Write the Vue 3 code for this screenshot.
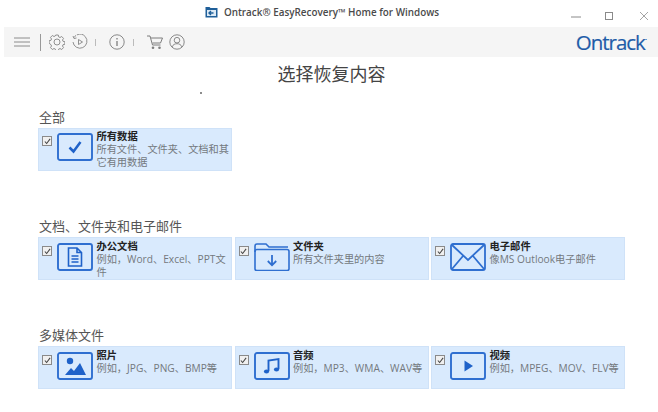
<script setup>
const groups = [
  { label: '全部', gap: 'first', items: [
    { icon: 'check', title: '所有数据', desc: '所有文件、文件夹、文档和其它有用数据' },
  ]},
  { label: '文档、文件夹和电子邮件', gap: 'next', items: [
    { icon: 'doc', title: '办公文档', desc: '例如，Word、Excel、PPT文件' },
    { icon: 'folder', title: '文件夹', desc: '所有文件夹里的内容' },
    { icon: 'mail', title: '电子邮件', desc: '像MS Outlook电子邮件' },
  ]},
  { label: '多媒体文件', gap: 'next', items: [
    { icon: 'photo', title: '照片', desc: '例如，JPG、PNG、BMP等' },
    { icon: 'music', title: '音频', desc: '例如，MP3、WMA、WAV等' },
    { icon: 'video', title: '视频', desc: '例如，MPEG、MOV、FLV等' },
  ]},
]
</script>

<template>
  <div class="app">
    <header class="titlebar">
      <div class="title">
        <svg class="app-icon" width="13" height="12" viewBox="0 0 13 12">
          <path d="M0.5 1h4l1 1h7v9.500h-12z" fill="#1f5f99" />
          <rect x="2" y="4" width="9" height="6" fill="#dbe9f5" />
          <path d="M8.500 7H4M6 5L4 7l2 2" fill="none" stroke="#1f5f99" stroke-width="1.400" />
        </svg>
        <span>Ontrack® EasyRecovery™ Home for Windows</span>
      </div>
      <div class="win-controls">
        <svg width="10" height="10" viewBox="0 0 10 10"><path d="M0 6h10" stroke="#8a8a8a" stroke-width="1" /></svg>
        <svg class="win-max" width="10" height="10" viewBox="0 0 10 10"><rect x="1.500" y="1.500" width="7" height="7" fill="none" stroke="#8a8a8a" /></svg>
        <svg class="win-close" width="10" height="10" viewBox="0 0 10 10"><path d="M1 1l8 8M9 1l-8 8" stroke="#9a9a9a" stroke-width="0.900" /></svg>
      </div>
    </header>

    <nav class="toolbar">
      <svg class="tool menu" width="16" height="10" viewBox="0 0 16 10"><path d="M0 1h16M0 5h16M0 9h16" stroke="#8c8c8c" stroke-width="1" /></svg>
      <span class="sep tall"></span>
      <svg class="tool gear" width="16" height="16" viewBox="0 0 16 16" fill="none" stroke="#858585" stroke-width="0.900">
        <path d="M6.700 1h2.600l.4 1.900 1.300.6 1.700-1 1.800 1.900-1 1.600.5 1.300 1.900.4v2.600l-1.900.4-.5 1.300 1 1.600-1.800 1.900-1.700-1-1.300.6-.4 1.900H6.700l-.4-1.900-1.300-.6-1.700 1-1.800-1.900 1-1.600-.5-1.300L.1 9.300V6.700L2 6.300l.5-1.300-1-1.600L3.300 1.500l1.700 1 1.300-.6z" />
        <circle cx="8" cy="8" r="3" />
      </svg>
      <svg class="tool replay" width="16" height="16" viewBox="0 0 16 16" fill="none" stroke="#858585" stroke-width="0.900">
        <path d="M2 3.500A7 7 0 1 1 1 8" stroke-dasharray="3 1 40" />
        <path d="M1 2l1 2.500 2.500-.5" />
        <path d="M6.500 5.500l4 2.500-4 2.500z" />
      </svg>
      <span class="sep short first"></span>
      <svg class="tool info" width="16" height="16" viewBox="0 0 16 16" fill="none" stroke="#7d7d7d">
        <circle cx="8" cy="8" r="7.200" stroke-width="0.900" />
        <path d="M8 7v5M8 4v1.500" stroke-width="1.300" />
      </svg>
      <span class="sep short second"></span>
      <svg class="tool cart" width="16" height="15" viewBox="0 0 16 15" fill="none" stroke="#7d7d7d">
        <path d="M0 1h3l2.500 9h8M4 3h11.500l-2 5H5.500" stroke-width="1" />
        <circle cx="6" cy="12.800" r="1.300" fill="#7d7d7d" stroke="none" />
        <circle cx="12.500" cy="12.800" r="1.300" fill="#7d7d7d" stroke="none" />
      </svg>
      <svg class="tool user" width="16" height="16" viewBox="0 0 16 16" fill="none" stroke="#7d7d7d" stroke-width="0.900">
        <circle cx="8" cy="8" r="7.200" />
        <circle cx="8" cy="6.200" r="2.800" />
        <path d="M3 13c1-2.500 3-3.300 5-3.300s4 .8 5 3.300" />
      </svg>
      <span class="logo">Ontrack<sup>·</sup></span>
    </nav>

    <main class="content">
      <h1 class="heading">选择恢复内容</h1>
      <i class="speck"></i>
      <section v-for="g in groups" :key="g.label" class="group" :class="g.gap">
        <h2 class="group-label">{{ g.label }}</h2>
        <div class="cards">
          <article v-for="c in g.items" :key="c.title" class="card">
            <span class="checkbox">
              <svg width="7" height="7" viewBox="0 0 8 8"><path d="M1 4l2 2.300L7 1" fill="none" stroke="#444" stroke-width="1.200" /></svg>
            </span>
            <span class="icon">
              <svg v-if="c.icon === 'check'" width="36" height="28" viewBox="0 0 36 28">
                <rect x="1" y="1" width="34" height="26" rx="2" fill="none" stroke="#2f6fd0" stroke-width="1.900" />
                <path d="M12.500 14.500l4 4 7-9.500" fill="none" stroke="#1f62c9" stroke-width="2.500" />
              </svg>
              <svg v-else-if="c.icon === 'doc'" width="36" height="28" viewBox="0 0 36 28">
                <rect x="1" y="1" width="34" height="26" rx="2" fill="none" stroke="#2f6fd0" stroke-width="1.900" />
                <path d="M11.500 5h8.500l4.500 4.500V23h-13z M20 5v4.500h4.500M14.500 13h7M14.500 16h7M14.500 19h7" fill="none" stroke="#1f62c9" stroke-width="1.600" />
              </svg>
              <svg v-else-if="c.icon === 'folder'" width="36" height="28" viewBox="0 0 36 28" fill="none" stroke="#2f6fd0" stroke-width="1.600">
                <path d="M1 9V3q0-2 2-2h9l3 3h19" />
                <path d="M3 6.500h30q2 0 2 2V26q0 1.500-2 1.500H3q-2 0-2-1.500V8.500q0-2 2-2z" />
                <path d="M18 12v10M13.800 18l4.200 4.300 4.200-4.300" stroke-width="1.800" />
              </svg>
              <svg v-else-if="c.icon === 'mail'" width="36" height="28" viewBox="0 0 36 28" fill="none" stroke="#2f6fd0" stroke-width="1.800">
                <rect x="1" y="1" width="34" height="26" rx="2" />
                <path d="M2 2l16 15L34 2M2 26l11-13M34 26L23 13" />
              </svg>
              <svg v-else-if="c.icon === 'photo'" width="36" height="28" viewBox="0 0 36 28">
                <rect x="1" y="1" width="34" height="26" rx="2" fill="none" stroke="#2f6fd0" stroke-width="1.900" />
                <circle cx="13" cy="9" r="3.200" fill="#1f62c9" />
                <path d="M8 23l6-7 3 3 6-8 6 12z" fill="#1f62c9" />
              </svg>
              <svg v-else-if="c.icon === 'music'" width="36" height="28" viewBox="0 0 36 28">
                <rect x="1" y="1" width="34" height="26" rx="2" fill="none" stroke="#2f6fd0" stroke-width="1.900" />
                <path d="M14.500 19V8.500l10-1.500V17" fill="none" stroke="#1f62c9" stroke-width="1.900" />
                <ellipse cx="12.500" cy="19.500" rx="2.600" ry="2.100" fill="#1f62c9" />
                <ellipse cx="22.500" cy="17.500" rx="2.600" ry="2.100" fill="#1f62c9" />
              </svg>
              <svg v-else width="36" height="28" viewBox="0 0 36 28">
                <rect x="1" y="1" width="34" height="26" rx="2" fill="none" stroke="#2f6fd0" stroke-width="1.900" />
                <path d="M14.500 8.500l8.500 5.500-8.500 5.500z" fill="#1f62c9" />
              </svg>
            </span>
            <div class="card-text">
              <h3 class="card-title">{{ c.title }}</h3>
              <p class="card-desc">{{ c.desc }}</p>
            </div>
          </article>
        </div>
      </section>
    </main>
  </div>
</template>

<style scoped>
.app {
  position: relative;
  width: 658px;
  height: 412px;
  overflow: hidden;
  background: #fff;
  font-family: "Open Sans", "Noto Sans CJK SC", sans-serif;
  color: #555;
}
.titlebar {
  position: relative;
  height: 27px;
  display: flex;
  justify-content: center;
  align-items: center;
}
.title {
  display: flex;
  align-items: center;
  gap: 6px;
  font-size: 9.900px;
  font-weight: 600;
  color: #4a4a4a;
  margin: -3px 14px 0 0;
}
.win-controls {
  position: absolute;
  right: 9px;
  top: 11px;
  display: flex;
}
.win-max { margin-left: 23px; }
.win-close { margin-left: 25px; }
.toolbar {
  height: 30px;
  margin-left: 4px;
  background: #f5f5f5;
  display: flex;
  align-items: center;
  padding: 0 10px;
}
.sep { width: 1px; background: #999; }
.sep.tall { height: 17px; margin-left: 10px; }
.gear { margin-left: 8px; }
.replay { margin-left: 7px; }
.sep.short { height: 7px; background: #bbb; }
.sep.first { margin-left: 7px; }
.info { margin-left: 13px; }
.sep.second { margin-left: 8px; }
.cart { margin-left: 13px; }
.user { margin-left: 6px; }
.logo {
  margin-left: auto;
  margin-right: 2px;
  font-size: 20.500px;
  letter-spacing: -1px;
  color: #1f5ca8;
  font-family: "Open Sans", sans-serif;
  -webkit-text-stroke: 0.2px #1f5ca8;
}
.logo sup { font-size: 8px; }
.content { padding: 0 33px 0 38px; }
.heading {
  margin: 6px 0 0;
  height: 24px;
  line-height: 22px;
  font-size: 18px;
  font-weight: 400;
  text-align: center;
  color: #444;
}
.speck {
  position: absolute;
  left: 200px;
  top: 92px;
  width: 2px;
  height: 2px;
  background: #666;
  border-radius: 50%;
}
.group.first { margin-top: 22px; }
.group.next { margin-top: 47px; }
.group-label {
  margin: 0;
  height: 19px;
  line-height: 17px;
  font-size: 13px;
  font-weight: 400;
  color: #555;
  padding-left: 1px;
}
.cards {
  display: grid;
  grid-template-columns: repeat(3, 194px);
  column-gap: 2.500px;
}
.card {
  height: 43px;
  box-sizing: border-box;
  background: #d9eafd;
  border: 1px solid #cfe2f8;
  display: flex;
  padding: 5px 0 0 3px;
}
.group.first .card { padding-top: 4px; }
.checkbox {
  width: 10px;
  height: 10px;
  box-sizing: border-box;
  margin-top: 3px;
  border: 1px solid #8a8a8a;
  background: #f0f0f0;
  display: flex;
  align-items: center;
  justify-content: center;
  flex: none;
}
.icon { margin-left: 5px; flex: none; display: block; height: 28px; }
.card-text { margin-left: 3.500px; min-width: 0; flex: 1; }
.card-title {
  margin: -3.500px 0 0;
  font-size: 10.300px;
  line-height: 13px;
  font-weight: 700;
  color: #222;
}
.card-desc {
  margin: 0;
  font-size: 10.200px;
  line-height: 13px;
  color: #74797e;
}
</style>
